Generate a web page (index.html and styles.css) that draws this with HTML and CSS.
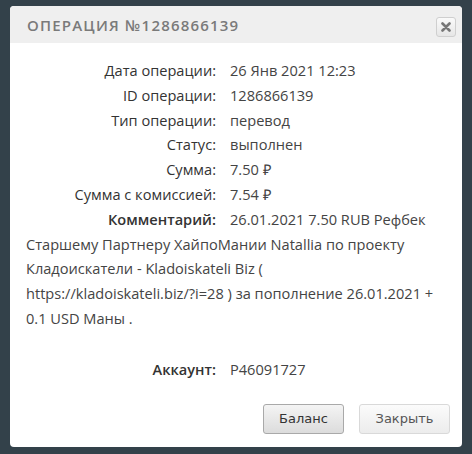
FILE: index.html
```html
<!DOCTYPE html>
<html lang="ru">
<head>
    <meta charset="UTF-8">
    <title>Операция №1286866139</title>
    <link rel="stylesheet" href="styles.css">
</head>
<body>
    <div class="dialog">
        <div class="dialog-header">
            <h1 class="dialog-title">Операция №1286866139</h1>
            <button class="close-btn" title="Закрыть">
                <svg width="10" height="10" viewBox="0 0 10 10">
                    <path d="M1.5 1.5 L8.5 8.5 M8.5 1.5 L1.5 8.5" stroke="#777" stroke-width="2.6" stroke-linecap="round"/>
                </svg>
            </button>
        </div>

        <div class="dialog-body">
            <div class="info-row">
                <span class="label">Дата операции:</span>
                <span class="value">26 Янв 2021 12:23</span>
            </div>
            <div class="info-row">
                <span class="label">ID операции:</span>
                <span class="value">1286866139</span>
            </div>
            <div class="info-row">
                <span class="label">Тип операции:</span>
                <span class="value">перевод</span>
            </div>
            <div class="info-row">
                <span class="label">Статус:</span>
                <span class="value">выполнен</span>
            </div>
            <div class="info-row">
                <span class="label">Сумма:</span>
                <span class="value">7.50 ₽</span>
            </div>
            <div class="info-row">
                <span class="label">Сумма с комиссией:</span>
                <span class="value">7.54 ₽</span>
            </div>
            <p class="comment"><span class="label bold">Комментарий:</span>26.01.2021 7.50 RUB Рефбек Старшему Партнеру ХайпоМании Natallia по проекту Кладоискатели - Kladoiskateli Biz ( <span class="nowrap">https://kladoiskateli.biz/?i=28</span> ) за пополнение 26.01.2021 + 0.1 USD Маны .</p>
            <div class="info-row account">
                <span class="label bold">Аккаунт:</span>
                <span class="value">P46091727</span>
            </div>
        </div>

        <div class="dialog-footer">
            <button class="btn btn-default">Баланс</button>
            <button class="btn btn-light">Закрыть</button>
        </div>
    </div>
</body>
</html>
```

FILE: styles.css
```css
body {
    margin: 0;
    padding: 6px 10px 8px;
    background-color: #33414a;
    font-family: "Open Sans", sans-serif;
}

/* Dialog */
.dialog {
    background-color: #fff;
    border-radius: 4px;
    overflow: hidden;
}

.dialog-header {
    display: flex;
    align-items: center;
    justify-content: space-between;
    height: 37px;
    padding: 0 6px 0 17px;
    background-color: #efefef;
}

.dialog-title {
    margin: 0;
    font-size: 15px;
    font-weight: 600;
    letter-spacing: 1.2px;
    text-transform: uppercase;
    color: #7a7a7a;
}

.close-btn {
    display: flex;
    align-items: center;
    justify-content: center;
    width: 20px;
    height: 20px;
    padding: 0;
    margin-top: 4px;
    background: linear-gradient(to bottom, #fafafa, #e6e6e6);
    border: 1px solid #cfcfcf;
    border-radius: 3px;
    cursor: pointer;
}

/* Body */
.dialog-body {
    padding: 15px 16px 0;
    font-size: 14.6px;
    line-height: 24.8px;
    color: #444;
}

.info-row {
    display: flex;
}

.label {
    display: inline-block;
    width: 190px;
    margin-right: 14px;
    text-align: right;
    color: #333;
}

.label.bold {
    font-weight: 600;
}

.comment {
    margin: 0;
}

.nowrap {
    white-space: nowrap;
}

.info-row.account {
    margin-top: 26px;
}

/* Footer */
.dialog-footer {
    display: flex;
    justify-content: flex-end;
    gap: 15px;
    padding: 22px 12px 13px;
}

.btn {
    height: 30px;
    padding: 0 15px;
    font-family: "DejaVu Sans", sans-serif;
    font-size: 13px;
    border-radius: 3px;
    cursor: pointer;
}

.btn-default {
    width: 81px;
    color: #333;
    background: linear-gradient(to bottom, #f4f4f4, #dcdcdc);
    border: 1px solid #a9a9a9;
}

.btn-light {
    width: 91px;
    color: #555;
    background: linear-gradient(to bottom, #fbfbfb, #ececec);
    border: 1px solid #d9d9d9;
}
```
